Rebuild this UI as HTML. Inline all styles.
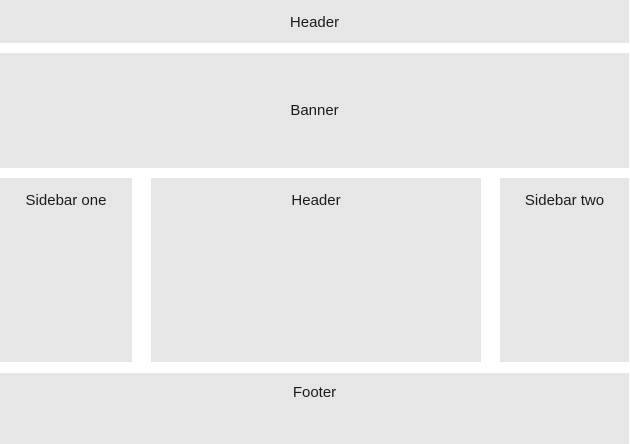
<!DOCTYPE html>
<html><head><style>
body{margin:0;width:630px;height:444px;background:#fff;position:relative;overflow:hidden;font-family:"Liberation Sans",sans-serif;font-size:15px;color:#1a1a1a}
div{position:absolute;background:#e6e6e6;text-align:center;box-sizing:border-box}
</style></head><body>
<div style="left:0;top:0;width:629px;height:43px;line-height:45px">Header</div>
<div style="left:0;top:53px;width:629px;height:115px;line-height:116px">Banner</div>
<div style="left:0;top:178px;width:132px;height:184px;padding-top:14px">Sidebar one</div>
<div style="left:151px;top:178px;width:330px;height:184px;padding-top:14px">Header</div>
<div style="left:500px;top:178px;width:129px;height:184px;padding-top:14px">Sidebar two</div>
<div style="left:0;top:373px;width:629px;height:71px;padding-top:11px">Footer</div>
</body></html>
